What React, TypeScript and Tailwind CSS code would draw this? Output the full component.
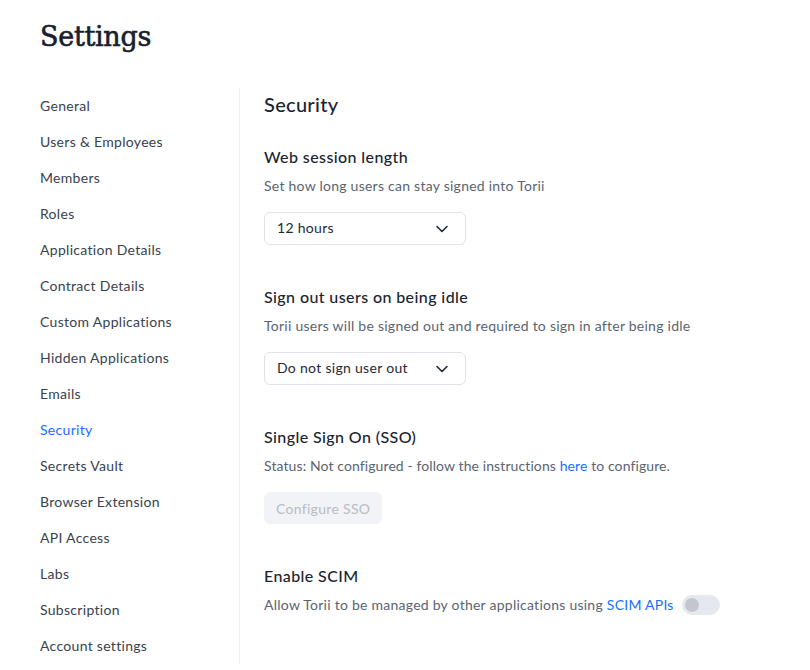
import React, { useState } from 'react';

const NAV_ITEMS = [
  'General',
  'Users & Employees',
  'Members',
  'Roles',
  'Application Details',
  'Contract Details',
  'Custom Applications',
  'Hidden Applications',
  'Emails',
  'Security',
  'Secrets Vault',
  'Browser Extension',
  'API Access',
  'Labs',
  'Subscription',
  'Account settings',
];

const ChevronDown: React.FC = () => (
  <svg width="14" height="14" viewBox="0 0 14 14" fill="none" className="text-[#1f2937]">
    <path d="M2 4.5L7 9.5L12 4.5" stroke="currentColor" strokeWidth="1.6" strokeLinecap="round" strokeLinejoin="round" />
  </svg>
);

const Select: React.FC<{ value: string }> = ({ value }) => (
  <button className="mt-4 flex h-[33px] w-[202px] items-center justify-between rounded-md border border-[#dfe2e8] bg-white pl-3 pr-4 text-[14px] leading-5 tracking-[0.3px] text-[#1f2937]">
    <span className="-mt-px">{value}</span>
    <ChevronDown />
  </button>
);

const Section: React.FC<{ title: string; className?: string; children: React.ReactNode }> = ({ title, className, children }) => (
  <section className={className}>
    <h3 className="h-6 text-[16px] leading-6 font-medium tracking-[0.4px] text-[#1a2330]">{title}</h3>
    {children}
  </section>
);

const App: React.FC = () => {
  const [active] = useState('Security');
  const [scim, setScim] = useState(false);

  return (
    <div className="min-h-screen bg-white font-['Lato','Noto_Sans',sans-serif] text-[#1a2330]">
      <header className="px-10 pt-[17px]">
        <h1 className="font-['DejaVu_Serif',serif] text-[27px] leading-10 font-normal tracking-[-0.3px] text-[#17202e] [-webkit-text-stroke:0.6px_#17202e]">
          Settings
        </h1>
      </header>

      <div className="mt-[31px] flex">
        <nav className="ml-10 w-[200px] border-r border-[#eceef4]">
          {NAV_ITEMS.map((item) => (
            <div
              key={item}
              className={`h-9 text-[14px] leading-9 tracking-[0.3px] ${item === active ? 'text-[#1a6dff]' : 'text-[#39424f]'}`}
            >
              {item}
            </div>
          ))}
        </nav>

        <main className="pl-6">
          <h2 className="h-8 text-[20px] leading-8 font-medium tracking-[0.3px] text-[#1a2330]">Security</h2>

          <Section title="Web session length" className="mt-[25px]">
            <p className="mt-[7px] text-[14px] leading-5 tracking-[0.25px] text-[#5b6471]">Set how long users can stay signed into Torii</p>
            <Select value="12 hours" />
          </Section>

          <Section title="Sign out users on being idle" className="mt-10">
            <p className="mt-[7px] text-[14px] leading-5 tracking-[0.25px] text-[#5b6471]">
              Torii users will be signed out and required to sign in after being idle
            </p>
            <Select value="Do not sign user out" />
          </Section>

          <Section title="Single Sign On (SSO)" className="mt-10">
            <p className="mt-[7px] text-[14px] leading-5 tracking-[0.1px] text-[#5b6471]">
              Status: Not configured - follow the instructions <a className="text-[#1a6dff]">here</a> to configure.
            </p>
            <button
              disabled
              className="mt-4 h-8 rounded-md bg-[#f2f3f6] px-3 text-[14px] tracking-[0.3px] text-[#b7bcc5]"
            >
              Configure SSO
            </button>
          </Section>

          <Section title="Enable SCIM" className="mt-10">
            <div className="mt-[7px] flex items-center text-[14px] leading-5 tracking-[0.25px] text-[#5b6471]">
              <span>
                Allow Torii to be managed by other applications using <a className="text-[#1a6dff]">SCIM APIs</a>
              </span>
              <button
                onClick={() => setScim(!scim)}
                className={`ml-2 flex h-5 w-[38px] items-center rounded-full px-[3px] ${scim ? 'justify-end bg-[#1a6dff]' : 'justify-start bg-[#e5e8ef]'}`}
              >
                <span className={`h-[14px] w-[14px] rounded-full ${scim ? 'bg-white' : 'bg-[#c3c6cd]'}`} />
              </button>
            </div>
          </Section>
        </main>
      </div>
    </div>
  );
};

export default App;
